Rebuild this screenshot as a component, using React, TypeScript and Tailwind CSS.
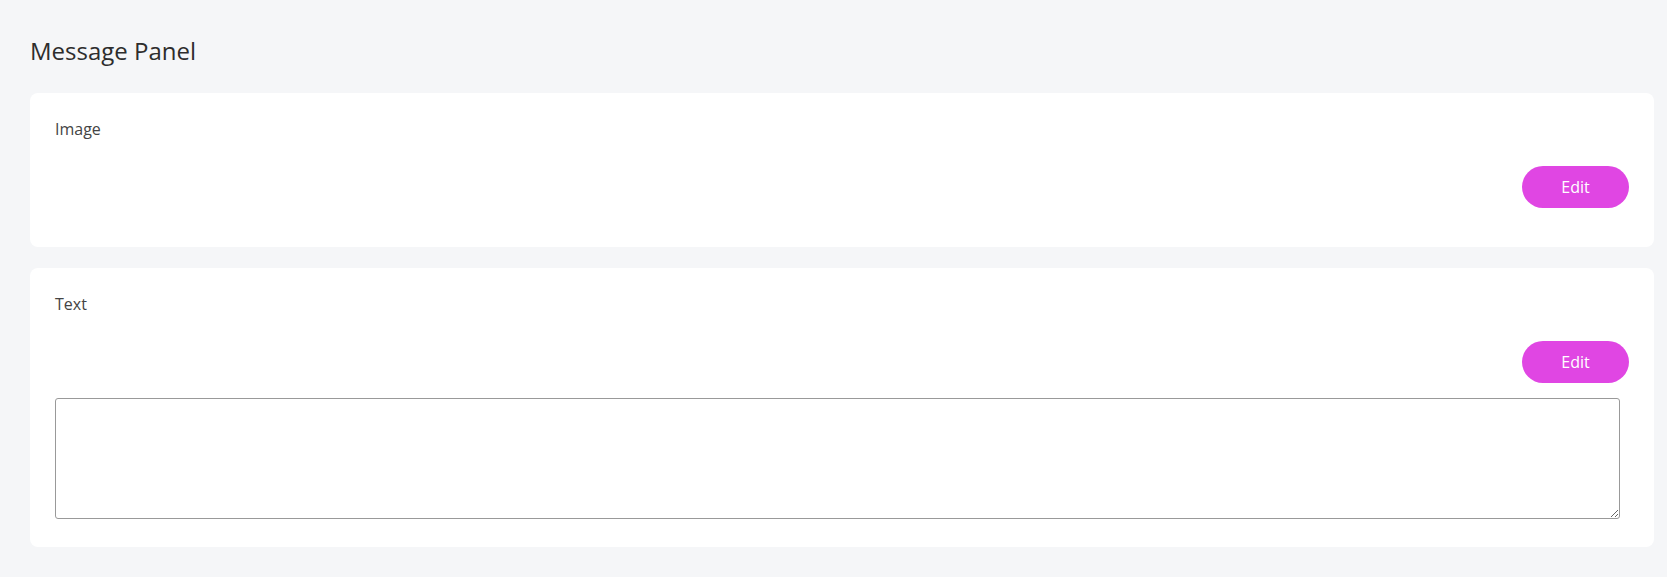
import React from "react";

function EditButton() {
  return (
    <button className="h-[42px] w-[107px] rounded-full bg-[#e046e3] text-[16px] leading-6 text-white">
      Edit
    </button>
  );
}

export default function App() {
  return (
    <div
      className="min-h-[577px] bg-[#f5f6f8] px-[30px] pt-[33px] pb-[30px] text-[#333]"
      style={{ fontFamily: '"Open Sans", "Noto Sans", sans-serif' }}
    >
      <h1 className="mb-6 text-[24px] font-medium leading-9 text-[#2d2d2d]">Message Panel</h1>
      <div className="flex flex-col gap-[21px] w-[1624px]">
        <div className="rounded-lg bg-white pl-[25px] pr-[25px] pt-6 pb-[39px]">
          <div className="text-[16px] leading-6 text-[#444]">Image</div>
          <div className="mt-[25px] flex justify-end">
            <EditButton />
          </div>
        </div>
        <div className="rounded-lg bg-white pl-[25px] pr-[25px] pt-6 pb-[28px]">
          <div className="text-[16px] leading-6 text-[#444]">Text</div>
          <div className="mt-[25px] flex justify-end">
            <EditButton />
          </div>
          <textarea className="mt-[15px] block h-[121px] w-[1565px] rounded-[3px] border border-[#999] bg-white"></textarea>
        </div>
      </div>
    </div>
  );
}
